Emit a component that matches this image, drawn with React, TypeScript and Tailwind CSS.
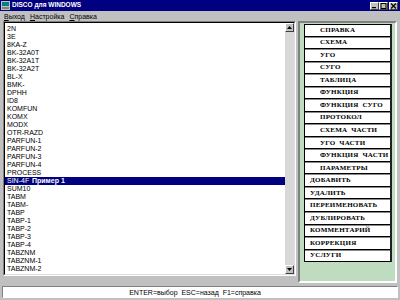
const ITEMS = [
  "2N", "3E", "8KA-Z", "BK-32A0T", "BK-32A1T", "BK-32A2T", "BL-X", "BMK-", "DPHH", "ID8",
  "KOMFUN", "KOMX", "MODX", "OTR-RAZD", "PARFUN-1", "PARFUN-2", "PARFUN-3", "PARFUN-4", "PROCESS",
  "SIN-4F", "SUM10", "TABM", "TABM-", "TABP", "TABP-1", "TABP-2", "TABP-3", "TABP-4",
  "TABZNM", "TABZNM-1", "TABZNM-2",
];

const BUTTONS: Array<{ label: string; indent: boolean }> = [
  { label: "СПРАВКА", indent: true },
  { label: "СХЕМА", indent: true },
  { label: "УГО", indent: true },
  { label: "СУГО", indent: true },
  { label: "ТАБЛИЦА", indent: true },
  { label: "ФУНКЦИЯ", indent: true },
  { label: "ФУНКЦИЯ  СУГО", indent: true },
  { label: "ПРОТОКОЛ", indent: true },
  { label: "СХЕМА  ЧАСТИ", indent: true },
  { label: "УГО  ЧАСТИ", indent: true },
  { label: "ФУНКЦИЯ  ЧАСТИ", indent: true },
  { label: "ПАРАМЕТРЫ", indent: true },
  { label: "ДОБАВИТЬ", indent: false },
  { label: "УДАЛИТЬ", indent: false },
  { label: "ПЕРЕИМЕНОВАТЬ", indent: false },
  { label: "ДУБЛИРОВАТЬ", indent: false },
  { label: "КОММЕНТАРИЙ", indent: false },
  { label: "КОРРЕКЦИЯ", indent: false },
  { label: "УСЛУГИ", indent: false },
];

function CaptionButton({ kind }: { kind: "min" | "max" | "close" }) {
  return (
    <div className="flex h-[8px] w-[9px] items-center justify-center border-t border-l border-white border-r border-b border-r-[#404040] border-b-[#404040] bg-[#c0c0c0]">
      <svg width="7" height="6" viewBox="0 0 7 6">
        {kind === "min" && <rect x="1" y="4" width="4" height="1.2" fill="#000" />}
        {kind === "max" && <rect x="1" y="0.5" width="5" height="5" fill="none" stroke="#000" strokeWidth="1" />}
        {kind === "close" && <path d="M1 0.5 L6 5.5 M6 0.5 L1 5.5" stroke="#000" strokeWidth="1.2" />}
      </svg>
    </div>
  );
}

function ScrollArrow({ up }: { up: boolean }) {
  return (
    <div className="flex h-[9px] w-[9px] shrink-0 items-center justify-center border-t border-l border-white border-r border-b border-r-[#404040] border-b-[#404040] bg-[#c0c0c0]">
      <svg width="5" height="3" viewBox="0 0 5 3">
        <path d={up ? "M2.5 0 L5 3 L0 3 Z" : "M0 0 L5 0 L2.5 3 Z"} fill="#000" />
      </svg>
    </div>
  );
}

export default function App() {
  return (
    <div className="flex h-[300px] w-[400px] flex-col overflow-hidden bg-[#c0c0c0] font-['Liberation_Sans',Arial,sans-serif] text-black">
      {/* title bar */}
      <div className="flex h-[11px] shrink-0 items-center bg-[#000080] pl-[1px] pr-[2px]">
        <svg width="9" height="9" viewBox="0 0 9 9" className="mr-[2px]">
          <rect x="0" y="0" width="9" height="9" fill="#c0c0c0" />
          <rect x="1" y="1" width="7" height="4" fill="#008080" />
          <rect x="1" y="6" width="7" height="2" fill="#808080" />
        </svg>
        <span className="text-[6.5px] font-bold leading-none text-white">DISCO для WINDOWS</span>
        <div className="ml-auto flex items-center">
          <CaptionButton kind="min" />
          <CaptionButton kind="max" />
          <div className="w-[1px]" />
          <CaptionButton kind="close" />
        </div>
      </div>

      {/* menu */}
      <div className="flex h-[10px] shrink-0 items-center gap-[5px] pl-[4px] text-[7px] leading-none">
        <span><u>В</u>ыход</span>
        <span><u>Н</u>астройка</span>
        <span><u>С</u>правка</span>
      </div>

      {/* body */}
      <div className="flex h-[265px] shrink-0 items-start">
        {/* list */}
        <div className="ml-[3px] h-[255px] w-[293px] border border-[#808080] border-r-white border-b-white">
          <div className="flex h-full border border-black border-r-[#dfdfdf] border-b-[#dfdfdf]">
            <div className="flex-1 bg-white pt-[2px]">
              {ITEMS.map((it) => {
                const sel = it === "SIN-4F";
                return (
                  <div
                    key={it}
                    className={`flex h-[8px] items-center pl-[2px] text-[7px] leading-[8px] ${sel ? "bg-[#000080] text-white" : ""}`}
                  >
                    <span className="w-[25px] shrink-0 whitespace-nowrap">{it}</span>
                    {sel && <span className="font-bold">Пример 1</span>}
                  </div>
                );
              })}
            </div>
            <div className="flex w-[9px] flex-col bg-[#d8d8d8]">
              <ScrollArrow up />
              <div className="flex-1" />
              <ScrollArrow up={false} />
            </div>
          </div>
        </div>

        {/* command panel */}
        <div className="ml-[2px] h-[262px] w-[99px] border-2 border-[#808080] border-r-white border-b-white bg-[#c0dcc0]">
          <div className="ml-[4px] mt-[1px] w-[88px] border-t border-l border-black border-r-2 border-r-[#202020] bg-[#8a8a8a]">
            <div className="flex h-[237px] flex-col gap-[1px]">
              {BUTTONS.map((b) => (
                <div
                  key={b.label}
                  className={`flex flex-1 items-center border-b border-black bg-white font-['Liberation_Serif','Times_New_Roman',serif] text-[7px] font-bold leading-none tracking-[0.2px] whitespace-pre ${b.indent ? "pl-[15px]" : "pl-[5px]"}`}
                >
                  {b.label}
                </div>
              ))}
            </div>
          </div>
        </div>
      </div>

      {/* status bar */}
      <div className="mx-[2px] flex h-[12px] shrink-0 items-center justify-center border border-[#808080] border-r-white border-b-white bg-white pr-[10px] text-[7px] leading-none whitespace-pre">
        ENTER=выбор  ESC=назад  F1=справка
      </div>
    </div>
  );
}
